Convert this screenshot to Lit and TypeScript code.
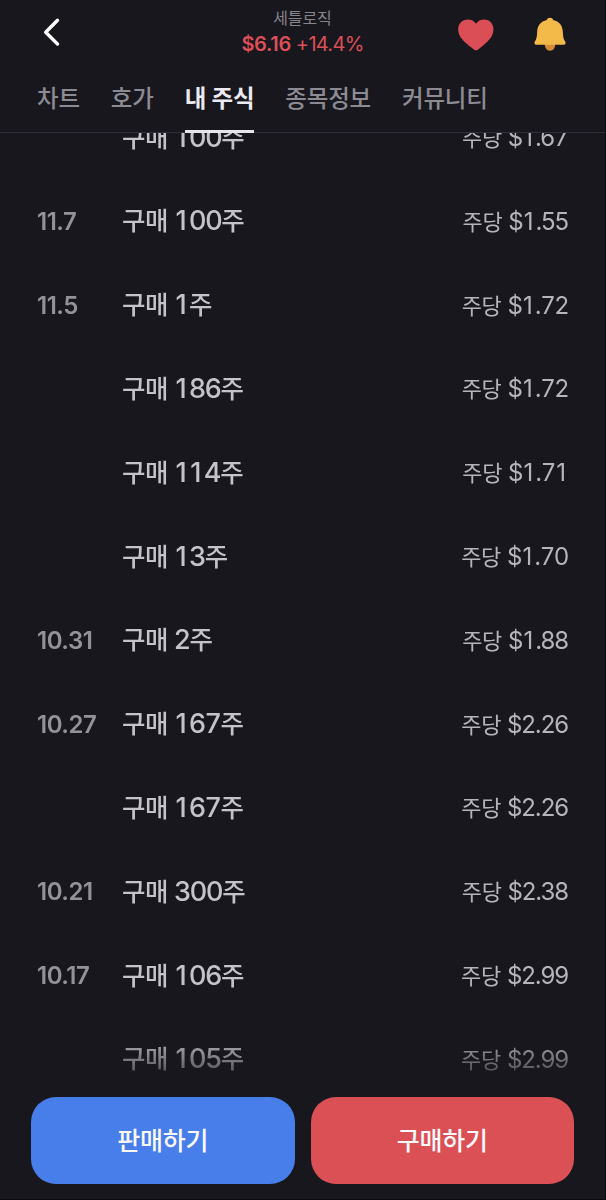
import { LitElement, html, css } from "lit";
import { customElement } from "lit/decorators.js";

interface Trade {
  date: string;
  qty: string;
  price: string;
}

const TRADES: Trade[] = [
  { date: "", qty: "100", price: "1.67" },
  { date: "11.7", qty: "100", price: "1.55" },
  { date: "11.5", qty: "1", price: "1.72" },
  { date: "", qty: "186", price: "1.72" },
  { date: "", qty: "114", price: "1.71" },
  { date: "", qty: "13", price: "1.70" },
  { date: "10.31", qty: "2", price: "1.88" },
  { date: "10.27", qty: "167", price: "2.26" },
  { date: "", qty: "167", price: "2.26" },
  { date: "10.21", qty: "300", price: "2.38" },
  { date: "10.17", qty: "106", price: "2.99" },
  { date: "", qty: "105", price: "2.99" },
];

const TABS = ["차트", "호가", "내 주식", "종목정보", "커뮤니티"];

// Gives the narrow digits the same advance as the others, so that figures line up.
const figures = (text: string) =>
  [...text].map((c) =>
    c === "1" ? html`<span class="one">1</span>` : c === "7" ? html`<span class="seven">7</span>` : c
  );

@customElement("trade-row")
class TradeRow extends LitElement {
  static properties = { trade: { attribute: false } };
  declare trade: Trade;

  static styles = css`
    :host {
      display: grid;
      grid-template-columns: 85px 1fr auto;
      align-items: center;
      height: 83.8px;
      padding: 0 37px;
      box-sizing: border-box;
      white-space: pre;
      line-height: 36px;
    }
    .date {
      font-size: 24px;
      font-weight: 600;
      letter-spacing: -0.5px;
      color: #93929a;
      padding-top: 1px;
    }
    .name {
      font-size: 25.5px;
      font-weight: 500;
      letter-spacing: -0.4px;
      color: #c4c3ca;
    }
    .qty {
      font-size: 27px;
      line-height: 1;
      letter-spacing: -1.2px;
      margin-left: -0.5px;
    }
    .price {
      font-size: 22px;
      font-weight: 400;
      letter-spacing: -0.3px;
      color: #b5b4bb;
      padding-top: 1px;
    }
    .amount {
      font-size: 24px;
      line-height: 1;
      letter-spacing: -1.1px;
    }
    .one {
      margin: 0 0.13em 0 0.05em;
    }
    .seven {
      margin: 0 0.03em;
    }
  `;

  render() {
    const t = this.trade;
    return html`<span class="date">${t.date}</span
      ><span class="name">구매 <span class="qty">${figures(t.qty)}</span>주</span
      ><span class="price">주당 <span class="amount">$${figures(t.price)}</span></span>`;
  }
}

@customElement("app-root")
class AppRoot extends LitElement {
  static styles = css`
    :host {
      display: flex;
      flex-direction: column;
      box-sizing: border-box;
      width: 606px;
      height: 1200px;
      overflow: hidden;
      background: #18171d;
      border-right: 1px solid #0c0b10;
      border-bottom: 1px solid #0c0b10;
      font-family: "Inter", "Noto Sans CJK KR", sans-serif;
    }
    .top {
      display: grid;
      grid-template-columns: 1fr auto 1fr;
      height: 68px;
      flex: none;
    }
    .back {
      margin: 17px 0 0 42px;
    }
    .title {
      text-align: center;
      padding-top: 8px;
      white-space: nowrap;
    }
    .stock {
      font-size: 16px;
      line-height: 21px;
      letter-spacing: -0.1px;
      color: #85848c;
    }
    .quote {
      font-size: 20px;
      line-height: 30px;
      letter-spacing: -0.7px;
      word-spacing: 0;
      color: #dc4f58;
    }
    .quote b {
      font-weight: 600;
      letter-spacing: -0.3px;
    }
    .actions {
      display: flex;
      justify-content: flex-end;
      gap: 40px;
      padding: 17px 39px 0 0;
    }
    svg {
      display: block;
    }
    .tabs {
      display: flex;
      gap: 31px;
      height: 64px;
      flex: none;
      padding-left: 37px;
      border-bottom: 1px solid #302e3c;
      position: relative;
      z-index: 1;
    }
    .tab {
      box-sizing: border-box;
      height: 65px;
      padding-top: 13px;
      font-size: 23.5px;
      line-height: 36px;
      font-weight: 500;
      letter-spacing: -0.2px;
      color: #8c8b93;
      white-space: nowrap;
    }
    .active {
      color: #ebeaf0;
      font-weight: 700;
      border-bottom: 3px solid #e6e5eb;
    }
    .list {
      flex: 1;
      min-height: 0;
      overflow: hidden;
      -webkit-mask-image: linear-gradient(#000 900px, transparent 963px);
      mask-image: linear-gradient(#000 900px, transparent 963px);
    }
    .rows {
      margin-top: -37.3px;
    }
    .buttons {
      display: grid;
      grid-template-columns: 1fr 1fr;
      gap: 16px;
      flex: none;
      padding: 0 31px 15px;
    }
    .button {
      height: 87px;
      border: 0;
      border-radius: 25px;
      padding: 0;
      font: 500 25px/36px "Inter", "Noto Sans CJK KR", sans-serif;
      letter-spacing: -0.2px;
      color: #fbf9fc;
    }
    .sell {
      background: #487eea;
    }
    .buy {
      background: #db5055;
    }
  `;

  render() {
    return html`
      <header class="top">
        <svg class="back" width="20" height="30" viewBox="0 0 20 30">
          <path d="M15.5 3.3 L3.7 15.3 L15.5 27" fill="none" stroke="#fff" stroke-width="3.4" stroke-linecap="round" stroke-linejoin="round" />
        </svg>
        <div class="title">
          <div class="stock">세틀로직</div>
          <div class="quote"><b>$6.16</b> +14.4%</div>
        </div>
        <div class="actions">
          <svg width="36" height="34" viewBox="0 0 36 34">
            <path d="M18 33.3 C16.8 33.3 15.6 32.3 13.7 30.7 C6.5 25 .2 20 .2 12.4 C.2 6.5 4.5 2.5 9.8 2.5 C13.3 2.5 16.2 4 18 6.8 C19.8 4 22.7 2.5 26.2 2.5 C31.5 2.5 35.4 6.5 35.4 12.4 C35.4 20 29.5 25 22.3 30.7 C20.4 32.3 19.2 33.3 18 33.3Z" fill="#dc4e55" />
          </svg>
          <svg width="32" height="34" viewBox="0 0 32 34">
            <path d="M10.7 26 H21.3 C21.5 30.5 19.5 33.7 16 33.7 C12.5 33.7 10.5 30.5 10.7 26Z" fill="#d98a36" />
            <path d="M16 .8 C17.6 .8 18.8 1.7 19.2 3 C25.3 4.4 28.6 8.7 28.8 14.5 C29 19 29.3 22 31 24.3 C32.1 26 31.4 27.8 29.6 27.8 H2.4 C.6 27.8 -.1 26 1 24.3 C2.7 22 3 19 3.2 14.5 C3.4 8.7 6.7 4.4 12.8 3 C13.2 1.7 14.4 .8 16 .8Z" fill="#f4ba49" />
          </svg>
        </div>
      </header>
      <nav class="tabs">
        ${TABS.map((t, i) => html`<div class="tab ${i === 2 ? "active" : ""}">${t}</div>`)}
      </nav>
      <main class="list">
        <div class="rows">${TRADES.map((t) => html`<trade-row .trade=${t}></trade-row>`)}</div>
      </main>
      <footer class="buttons">
        <button class="button sell">판매하기</button>
        <button class="button buy">구매하기</button>
      </footer>
    `;
  }
}
